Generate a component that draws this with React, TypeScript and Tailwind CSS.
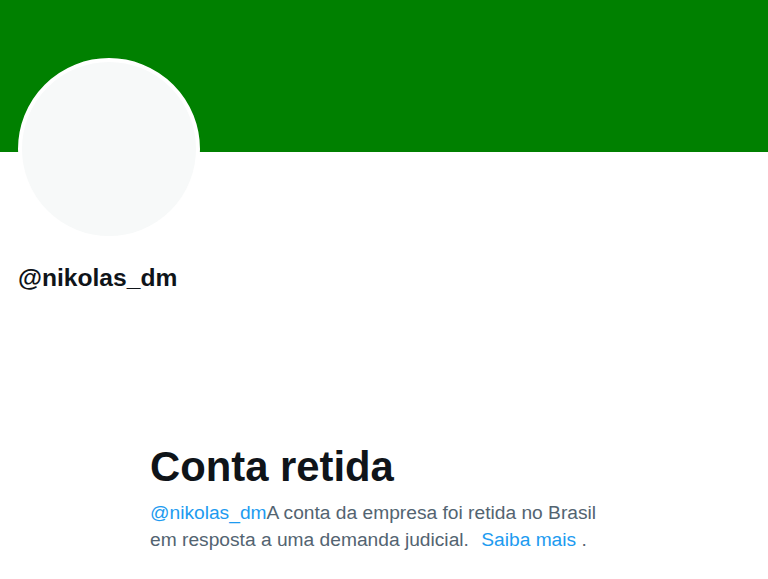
import React from 'react';

const App = () => {
  return (
    <div className="min-h-[579px] bg-white" style={{ fontFamily: '"Liberation Sans", Arial, sans-serif' }}>
      {/* banner */}
      <div className="h-[152px] bg-[#008000]" />

      <div className="px-[18px]">
        {/* avatar */}
        <div className="-mt-[94px] w-[182px] h-[182px] rounded-full border-4 border-white bg-[#f7f9f9]" />

        {/* handle */}
        <div className="mt-[24px] text-[24.6px] leading-[28px] font-bold text-[#0f1419]">@nikolas_dm</div>
      </div>

      {/* withheld notice */}
      <div className="ml-[150px] mt-[151px] w-[475px]">
        <h2 className="text-[41.8px] leading-[48px] font-bold text-[#0f1419]">Conta retida</h2>
        <p className="mt-[8px] text-[19.2px] leading-[27px] text-[#536471]">
          <span className="text-[#1d9bf0]">@nikolas_dm</span>A conta da empresa foi retida no Brasil em resposta a uma demanda
          judicial. <a href="#" className="ml-[7px] text-[#1d9bf0]">Saiba mais</a> .
        </p>
      </div>
    </div>
  );
};

export default App;
